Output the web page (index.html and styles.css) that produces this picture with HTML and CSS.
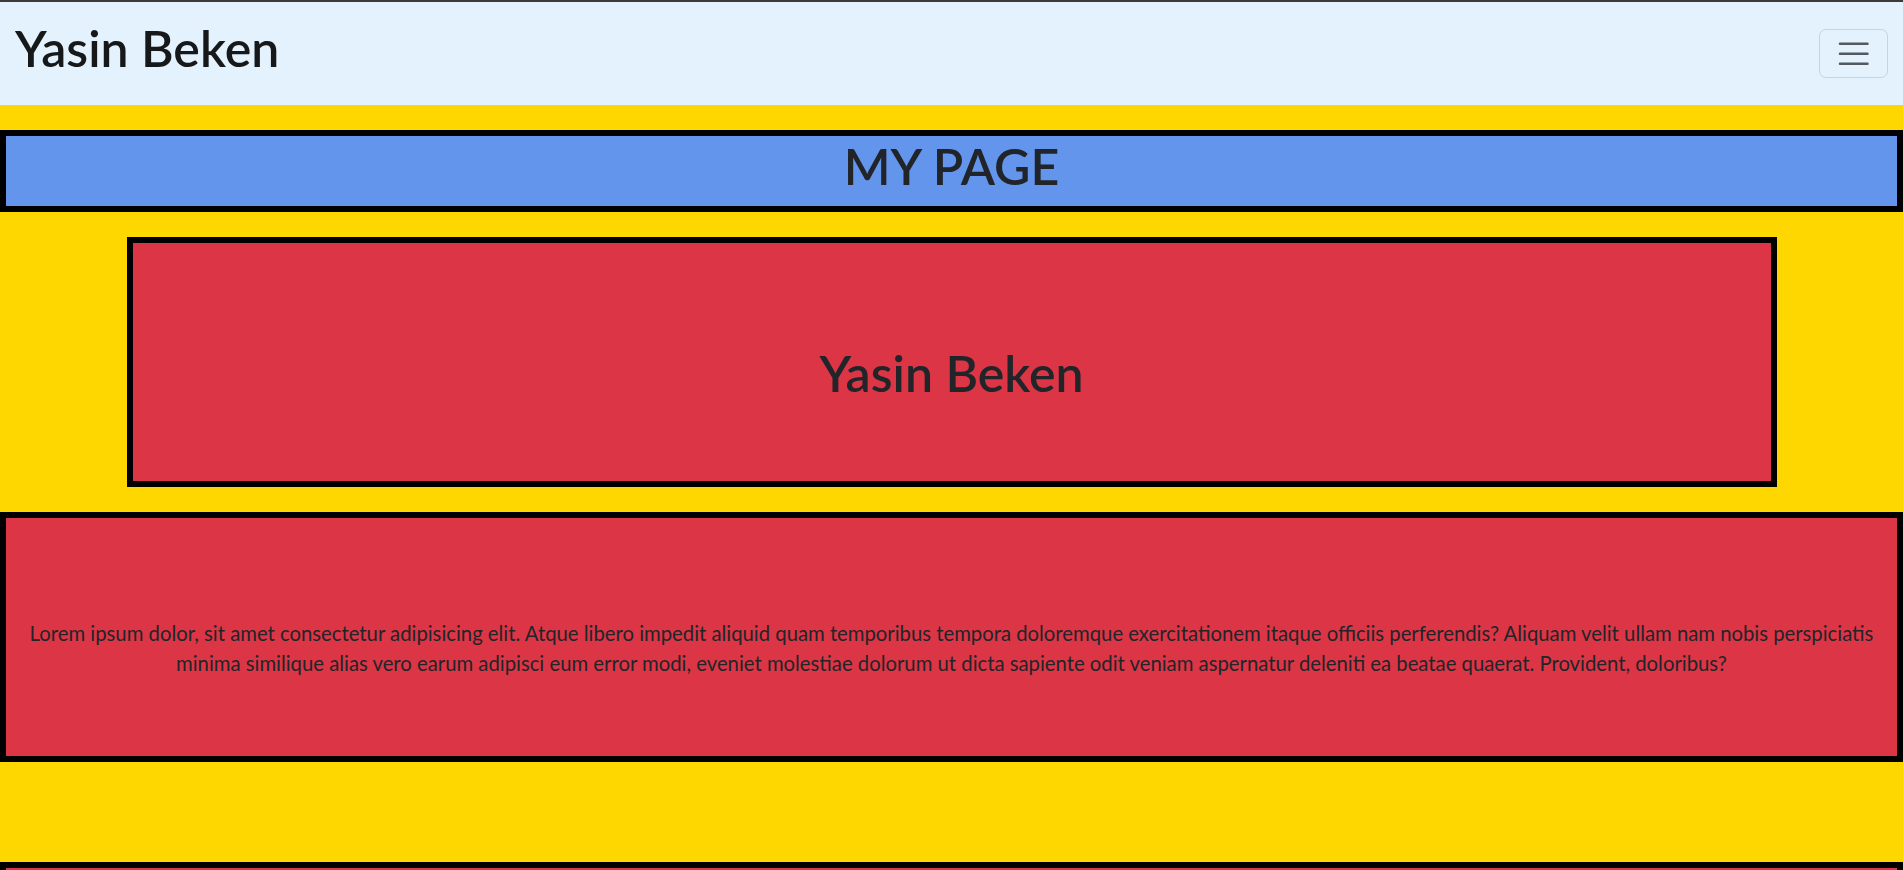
FILE: index.html
```html
<!DOCTYPE html>
<html lang="en">
<head>
<meta charset="utf-8">
<title>Yasin Beken</title>
<link rel="stylesheet" href="styles.css">
</head>
<body>
<nav class="navbar">
  <a class="brand" href="#"><h1 class="brand-title">Yasin Beken</h1></a>
  <button class="toggler" type="button" aria-label="Toggle navigation">
    <svg class="toggler-icon" viewBox="0 0 30 30" aria-hidden="true">
      <path d="M4 7h22M4 15h22M4 23h22" />
    </svg>
  </button>
</nav>
<main class="page">
  <header class="title-box"><h1 class="heading">MY PAGE</h1></header>
  <section class="hero-box"><h1 class="heading">Yasin Beken</h1></section>
  <section class="text-box">
    <p class="lorem">Lorem ipsum dolor, sit amet consectetur adipisicing elit. Atque libero impedit aliquid quam temporibus tempora doloremque exercitationem itaque officiis perferendis? Aliquam velit ullam nam nobis perspiciatis minima similique alias vero earum adipisci eum error modi, eveniet molestiae dolorum ut dicta sapiente odit veniam aspernatur deleniti ea beatae quaerat. Provident, doloribus?</p>
  </section>
  <section class="text-box"></section>
</main>
</body>
</html>
```
FILE: styles.css
```css
* { box-sizing: border-box; }

html, body {
  margin: 0;
  padding: 0;
}

body {
  background: #ffd700;
  border-top: 2px solid #3b3b3b;
  font-family: Lato, "Open Sans", sans-serif;
  color: #212529;
  font-size: 20px;
  line-height: 1.5;
  overflow: hidden;
}

.navbar {
  background: #e3f2fd;
  display: flex;
  align-items: center;
  justify-content: space-between;
  padding: 10px 15px;
}

.brand {
  display: block;
  padding: 6px 0 7px;
  color: rgba(0, 0, 0, 0.9);
  text-decoration: none;
}

.brand-title {
  margin: 0 0 10px;
  font-size: 50px;
  line-height: 60px;
  font-weight: 600;
}

.toggler {
  display: flex;
  padding: 5px 15px;
  background: transparent;
  border: 1px solid rgba(0, 0, 0, 0.12);
  border-radius: 7px;
}

.toggler-icon {
  width: 37.5px;
  height: 37.5px;
  fill: none;
  stroke: rgba(33, 37, 41, 0.75);
  stroke-width: 2;
  stroke-linecap: round;
}

.page {
  padding-top: 25px;
}

.heading {
  margin: 0 0 10px;
  font-size: 50px;
  line-height: 60px;
  font-weight: 600;
  text-align: center;
}

.title-box {
  background: #6495ed;
  border: 6px solid #000;
  margin-bottom: 25px;
}

.hero-box {
  width: 1650px;
  height: 250px;
  margin: 0 auto 25px;
  padding-top: 100px;
  background: #dc3545;
  border: 6px solid #000;
}

.text-box {
  height: 250px;
  margin-bottom: 100px;
  padding: 100px 15px 0;
  background: #dc3545;
  border: 6px solid #000;
}

.lorem {
  margin: 0 0 20px;
  font-size: 20.3px;
  line-height: 30px;
  text-align: center;
}
```
